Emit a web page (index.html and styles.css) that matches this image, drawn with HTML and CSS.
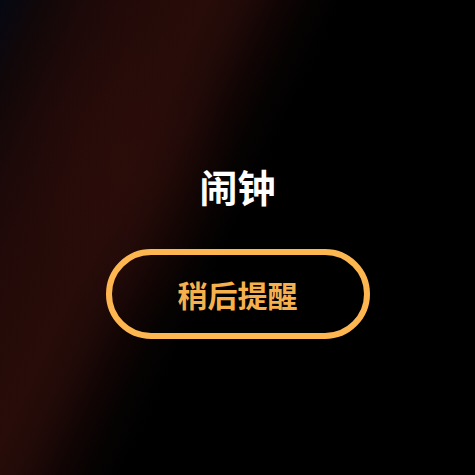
FILE: index.html
```html
<!DOCTYPE html>
<html lang="zh-CN">
<head>
<meta charset="utf-8">
<title>闹钟</title>
<link rel="stylesheet" href="styles.css">
</head>
<body>
<main class="screen">
  <h1 class="title">闹钟</h1>
  <button class="snooze" type="button">稍后提醒</button>
</main>
</body>
</html>
```

FILE: styles.css
```css
html, body {
  margin: 0;
  padding: 0;
  height: 100%;
}
body {
  background: #000;
  font-family: "Noto Sans CJK SC", "Noto Sans", sans-serif;
}
.screen {
  box-sizing: border-box;
  height: 100vh;
  padding-top: 26px;
  display: flex;
  flex-direction: column;
  align-items: center;
  justify-content: center;
  gap: 40px;
  background:
    radial-gradient(ellipse 150px 220px at 130px 170px, rgba(50, 14, 10, 0.3), rgba(0,0,0,0) 70%),
    linear-gradient(115deg, #050812 0%, #110709 6%, #1d0908 13%, #250b08 22%, #270c09 30%, #200a08 35%, #110504 40%, #050202 45%, #000 50%, #000 100%);
}
.title {
  margin: 0;
  font-size: 38px;
  line-height: 46px;
  font-weight: 700;
  color: #fff;
}
.snooze {
  box-sizing: border-box;
  width: 264px;
  height: 90px;
  border: 6px solid #fdb650;
  border-radius: 45px;
  background: transparent;
  color: #f6b14d;
  font-family: "Noto Sans CJK SC", "Noto Sans", sans-serif;
  font-size: 30px;
  font-weight: 700;
  padding: 0;
  display: flex;
  align-items: center;
  justify-content: center;
}
```
